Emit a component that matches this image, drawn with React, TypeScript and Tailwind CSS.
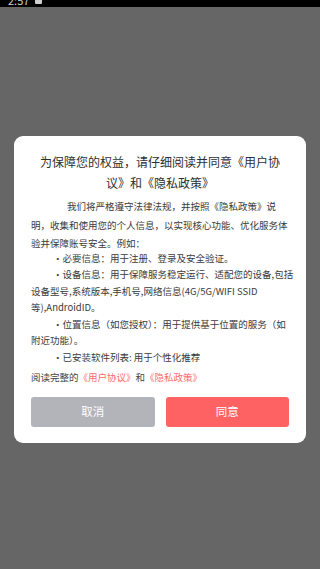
import React from "react"

const font = { fontFamily: '"Noto Sans CJK SC", "Noto Sans", sans-serif' }

function StatusBar() {
  return (
    <div className="h-[7px] w-full overflow-hidden bg-black">
      <div className="-mt-[6px] flex items-center gap-[6px] pl-[8px] text-[11px] leading-[12px] text-[#cfcfcf]">
        <span>2:57</span>
        <span className="inline-block h-[8px] w-[7px] rounded-[1px] bg-[#cfcfcf]" />
      </div>
    </div>
  )
}

export default function App() {
  return (
    <div className="flex h-[569px] w-[320px] flex-col bg-[#666666]" style={font}>
      <StatusBar />
      <div className="flex flex-1 items-start justify-center pt-[129px]">
        <div className="w-[292px] rounded-[9px] bg-white px-[16px] pb-[16px] pt-[15px]">
          <h1 className="px-[8px] text-center text-[12px] leading-[21px] text-[#2e2e2e]">
            为保障您的权益，请仔细阅读并同意《用户协议》和《隐私政策》
          </h1>
          <div className="mr-[-4px] mt-[4px] pl-[1px] text-[9.5px] text-[#3a3a3a]">
            <p className="indent-[36px] leading-[18.5px]">
              我们将严格遵守法律法规，并按照《隐私政策》说明，收集和使用您的个人信息，以实现核心功能、优化服务体验并保障账号安全。例如：
            </p>
            <div className="mt-[-3px] flex flex-col leading-[16.5px]">
              <p className="indent-[22px]">·必要信息：用于注册、登录及安全验证。</p>
              <p className="indent-[22px]">
                ·设备信息：用于保障服务稳定运行、适配您的设备,包括设备型号,系统版本,手机号,网络信息(4G/5G/WIFI SSID等),AndroidID。
              </p>
              <p className="indent-[22px]">·位置信息（如您授权）：用于提供基于位置的服务（如附近功能）。</p>
              <p className="indent-[22px]">·已安装软件列表: 用于个性化推荐</p>
            </div>
            <p className="mt-[3px] leading-[18px] text-[#444444]">
              阅读完整的<span className="text-[#ff6b6b]">《用户协议》</span>和
              <span className="text-[#ff6b6b]">《隐私政策》</span>
            </p>
          </div>
          <div className="mt-[11px] flex gap-[11px] px-[1px]">
            <button className="h-[30px] flex-1 rounded-[3px] bg-[#b3b3ba] text-[11.5px] text-white">
              取消
            </button>
            <button className="h-[30px] flex-1 rounded-[3px] bg-[#ff6262] text-[11.5px] text-white">
              同意
            </button>
          </div>
        </div>
      </div>
    </div>
  )
}
